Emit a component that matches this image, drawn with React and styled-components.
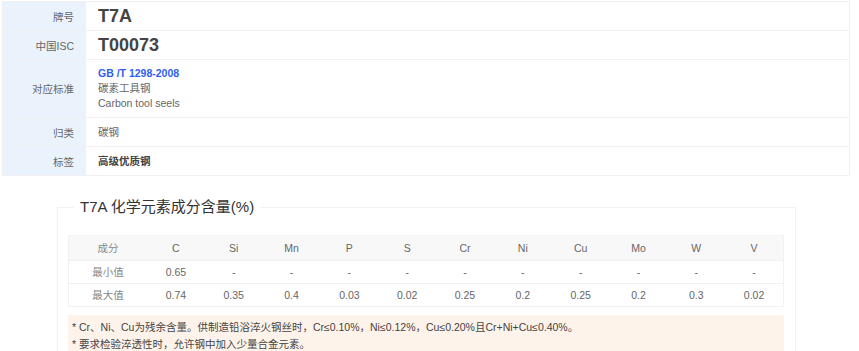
import React from 'react';
import styled, { createGlobalStyle } from 'styled-components';

const Global = createGlobalStyle`
  body {
    margin: 0;
    background: #fff;
    font-family: "Liberation Sans", Arial, "Noto Sans CJK SC", sans-serif;
  }
`

const info = [
  { label: '牌号', value: 'T7A', big: true },
  { label: '中国ISC', value: 'T00073', big: true },
  { label: '对应标准', std: true },
  { label: '归类', value: '碳钢' },
  { label: '标签', value: '高级优质钢', bold: true },
]

const cols = ['C', 'Si', 'Mn', 'P', 'S', 'Cr', 'Ni', 'Cu', 'Mo', 'W', 'V']
const rows = [
  { name: '最小值', vals: ['0.65', '-', '-', '-', '-', '-', '-', '-', '-', '-', '-'] },
  { name: '最大值', vals: ['0.74', '0.35', '0.4', '0.03', '0.02', '0.25', '0.2', '0.25', '0.2', '0.3', '0.02'] },
]

export default function App() {
  return (
    <Page>
      <Global />
      <InfoTable>
        {info.map((r) => (
          <InfoRow key={r.label}>
            <Label>{r.label}</Label>
            <Value big={r.big} bold={r.bold}>
              {r.std ? (
                <>
                  <StdLink>GB /T 1298-2008</StdLink>
                  <div>碳素工具钢</div>
                  <div>Carbon tool seels</div>
                </>
              ) : r.value}
            </Value>
          </InfoRow>
        ))}
      </InfoTable>

      <Box>
        <Legend>T7A 化学元素成分含量(%)</Legend>
        <Grid>
          <HeadCell first>成分</HeadCell>
          {cols.map((c) => <HeadCell key={c}>{c}</HeadCell>)}
          {rows.map((r) => (
            <React.Fragment key={r.name}>
              <Cell first>{r.name}</Cell>
              {r.vals.map((v, i) => <Cell key={i}>{v}</Cell>)}
            </React.Fragment>
          ))}
        </Grid>
        <Note>
          <div>* Cr、Ni、Cu为残余含量。供制造铅浴淬火钢丝时，Cr≤0.10%，Ni≤0.12%，Cu≤0.20%且Cr+Ni+Cu≤0.40%。</div>
          <div>* 要求检验淬透性时，允许钢中加入少量合金元素。</div>
        </Note>
      </Box>
    </Page>
  )
}

const Page = styled.div`
  padding: 1px 9px 0 2px;
`
const InfoTable = styled.div`
  border: 1px solid #f0f0f0;
  width: 846px;
`
const InfoRow = styled.div`
  display: flex;
  border-bottom: 1px solid #f2f2f2;
  min-height: 28px;
  &:last-child { border-bottom: none; }
`
const Label = styled.div`
  width: 71px;
  flex-shrink: 0;
  background: #eaf3fc;
  color: #666;
  font-size: 10.5px;
  padding-right: 12px;
  display: flex;
  align-items: center;
  justify-content: flex-end;
`
const Value = styled.div`
  flex: 1;
  padding: 6px 12px;
  display: flex;
  flex-direction: column;
  justify-content: center;
  color: ${p => (p.big || p.bold) ? '#444' : '#666'};
  font-size: ${p => p.big ? '18px' : '10.5px'};
  font-weight: ${p => (p.big || p.bold) ? 'bold' : 'normal'};
  line-height: 15px;
`
const StdLink = styled.div`
  color: #2f5ef0;
  font-weight: bold;
`
const Box = styled.fieldset`
  margin: 19px 0 0 55px;
  width: 716px;
  border: 1px solid #f2f2f2;
  padding: 0 11px 0 10px;
`
const Legend = styled.legend`
  font-size: 15px;
  line-height: 24px;
  color: #333;
  padding: 0 6px;
  margin-left: 6px;
`
const Grid = styled.div`
  margin-top: 16px;
  display: grid;
  grid-template-columns: 78px repeat(11, 1fr);
  border: 1px solid #f2f2f2;
`
const HeadCell = styled.div`
  background: #f8f8f8;
  height: 24px;
  line-height: 24px;
  text-align: center;
  font-size: 10.5px;
  color: ${p => p.first ? '#888' : '#666'};
  border-bottom: 1px solid #f0f0f0;
`
const Cell = styled.div`
  height: 22px;
  line-height: 22px;
  text-align: center;
  font-size: 10.5px;
  color: ${p => p.first ? '#888' : '#666'};
  border-bottom: 1px solid #f0f0f0;
  &:nth-last-child(-n+12) { border-bottom: none; }
`
const Note = styled.div`
  margin-top: 8px;
  background: #fdf3ea;
  padding: 4px 4px 10px;
  font-size: 10.5px;
  line-height: 17px;
  color: #444;
`
